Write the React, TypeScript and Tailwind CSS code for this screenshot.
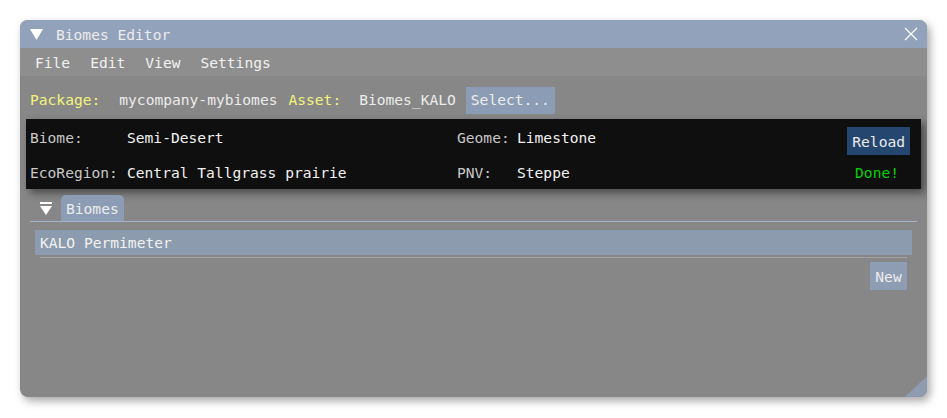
import React from "react";

const mono = { fontFamily: '"DejaVu Sans Mono", "Liberation Mono", monospace' };

function TitleBar() {
  return (
    <div className="flex h-[28px] items-center bg-[#92a2ba] pl-[10px] pr-[9px]">
      <svg width="13" height="11" viewBox="0 0 13 11" className="shrink-0">
        <path d="M0 0 H13 L6.5 11 Z" fill="#ffffff" />
      </svg>
      <span className="ml-[13px] pt-[2px] text-[#ececec]">Biomes Editor</span>
      <div className="flex-1" />
      <svg width="14" height="14" viewBox="0 0 14 14">
        <path d="M1 1 L13 13 M13 1 L1 13" stroke="#ffffff" strokeWidth="1.2" />
      </svg>
    </div>
  );
}

function MenuBar() {
  return (
    <div className="flex h-[28px] items-center gap-[20px] bg-[#8e8e8e] pl-[15px] pt-[2px] text-[#f2f2f2]">
      {["File", "Edit", "View", "Settings"].map((m) => (
        <span key={m}>{m}</span>
      ))}
    </div>
  );
}

function InfoPanel() {
  return (
    <div className="ml-[6px] mr-[6px] mt-[6px] h-[70px] bg-[#0f0f0f] pl-[4px] pr-[11px] shadow-[4px_4px_8px_rgba(0,0,0,0.45)]">
      <div className="flex h-[38px] items-center">
        <span className="w-[97px] text-[#c8c8c8]">Biome:</span>
        <span className="w-[330px] text-[#f2f2f2]">Semi-Desert</span>
        <span className="w-[60px] text-[#c8c8c8]">Geome:</span>
        <span className="text-[#f2f2f2]">Limestone</span>
        <div className="flex-1" />
        <button className="mt-[6px] h-[28px] bg-[#25476f] px-[5px] pt-[1px] text-[#ececec]">Reload</button>
      </div>
      <div className="flex h-[30px] items-center pt-[1px]">
        <span className="w-[97px] text-[#c8c8c8]">EcoRegion:</span>
        <span className="w-[330px] text-[#f2f2f2]">Central Tallgrass prairie</span>
        <span className="w-[60px] text-[#c8c8c8]">PNV:</span>
        <span className="text-[#f2f2f2]">Steppe</span>
        <div className="flex-1" />
        <span className="mr-[11px] text-[#00d200]">Done!</span>
      </div>
    </div>
  );
}

function BiomesTab() {
  return (
    <div className="mt-[7px] pl-[10px] pr-[10px]">
      <div className="flex h-[26px] items-end border-b border-[#a3b3c9]">
        <div className="flex h-full w-[31px] items-center justify-center">
          <svg width="12" height="14" viewBox="0 0 12 14">
            <rect x="0" y="0" width="12" height="2" fill="#ffffff" />
            <path d="M0 4 H12 L6 13 Z" fill="#ffffff" />
          </svg>
        </div>
        <div className="flex h-[26px] w-[63px] items-center rounded-t-[5px] bg-[#8b9cb4] pl-[5px] pt-[1px] text-[#ececec]">
          Biomes
        </div>
      </div>
      <div className="ml-[5px] mr-[5px] mt-[8px] flex h-[25px] items-center bg-[#8c9bad] pl-[5px] pt-[1px] text-[#f2f2f2]">
        KALO Permimeter
      </div>
      <div className="ml-[10px] mr-[10px] mt-[2px] h-[1px] bg-[#a2a2a2]" />
      <div className="mr-[10px] mt-[4px] flex justify-end">
        <button className="h-[28px] w-[37px] bg-[#8e9db3] pt-[1px] text-[#ececec]">New</button>
      </div>
    </div>
  );
}

export default function App() {
  return (
    <div className="h-[418px] w-[947px] bg-white pl-[20px] pt-[20px]" style={mono}>
      <div className="relative flex h-[377px] w-[907px] flex-col overflow-hidden rounded-[8px] bg-[#878787] text-[14.6px] shadow-[3px_4px_8px_rgba(0,0,0,0.35)]">
        <TitleBar />
        <MenuBar />
        <div className="mt-[10px] flex h-[27px] items-center pl-[10px] pt-[1px]">
          <span className="text-[#f4f47c]">Package:</span>
          <span className="ml-[19px] text-[#ececec]">mycompany-mybiomes</span>
          <span className="ml-[11px] text-[#f4f47c]">Asset:</span>
          <span className="ml-[18px] text-[#ececec]">Biomes_KALO</span>
          <button className="ml-[10px] h-[27px] bg-[#8b9cb4] px-[5px] text-[#ececec]">Select...</button>
        </div>
        <InfoPanel />
        <BiomesTab />
        <svg
          width="22"
          height="21"
          viewBox="0 0 22 21"
          className="absolute bottom-0 right-0"
        >
          <path d="M22 0 V21 H0 Z" fill="#8e9bb0" />
        </svg>
      </div>
    </div>
  );
}
